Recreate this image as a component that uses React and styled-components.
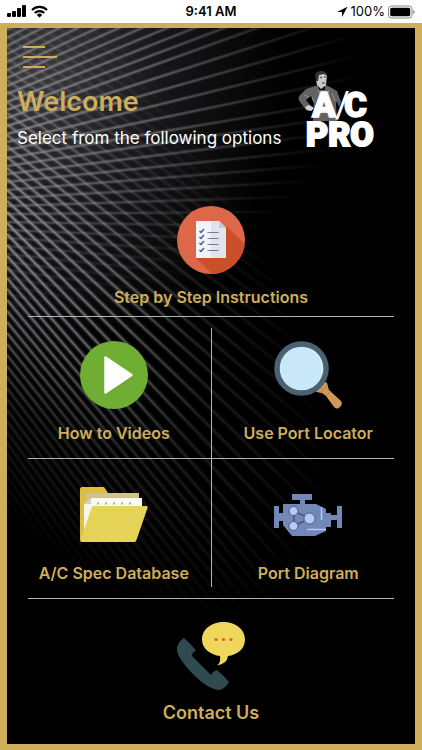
import React from "react";
import styled, { createGlobalStyle } from "styled-components";

const GOLD = "#cfae5b";

const GlobalStyle = createGlobalStyle`
  *, *::before, *::after { box-sizing: border-box; }
  body { margin: 0; background: #000; font-family: Inter, "Liberation Sans", sans-serif; }
`;

const Screen = styled.div`
  display: flex;
  flex-direction: column;
  min-height: 100vh;
`;

const StatusBar = styled.div`
  display: grid;
  grid-template-columns: 1fr auto 1fr;
  align-items: center;
  height: 23px;
  padding: 0 7px;
  background: #fff;
  color: #000;
  font-size: 13px;
  line-height: 23px;
`;

const StatusGroup = styled.div`
  display: flex;
  align-items: center;
  justify-content: ${(p) => (p.$end ? "flex-end" : "flex-start")};
  gap: ${(p) => (p.$end ? "3px" : "5px")};
`;

const Time = styled.span`
  font-weight: 600;
`;

const Frame = styled.div`
  position: relative;
  flex: 1;
  display: flex;
  flex-direction: column;
  border: solid ${GOLD};
  border-width: 5px 7px 6px;
  background: #000;
`;

const Backdrop = styled.svg`
  position: absolute;
  inset: 0;
  width: 100%;
  height: 100%;
`;

const Content = styled.div`
  position: relative;
  display: flex;
  flex-direction: column;
`;

const Header = styled.header`
  display: flex;
  justify-content: space-between;
  align-items: flex-end;
  padding: 14px 42px 0 10px;
`;

const Intro = styled.div`
  display: flex;
  flex-direction: column;
  align-items: flex-start;
`;

const MenuButton = styled.button`
  display: flex;
  margin: 0 0 14px 3px;
  padding: 3px;
  border: 0;
  background: none;
  cursor: pointer;
`;

const Title = styled.h1`
  margin: 0;
  color: ${GOLD};
  font-size: 27px;
  font-weight: 600;
  line-height: 32px;
`;

const Subtitle = styled.p`
  margin: 8px 0 0;
  color: #fff;
  font-size: 17px;
  line-height: 24px;
  white-space: nowrap;
`;

const Options = styled.nav`
  display: flex;
  flex-direction: column;
  margin: 32px 10px 0;
`;

const Pairs = styled.div`
  display: grid;
  grid-template-columns: 1fr 1px 1fr;
`;

const Rule = styled.hr`
  width: calc(100% - 22px);
  height: 1px;
  margin: 0 11px;
  border: 0;
  background: #b4b4b4;
`;

const MiddleRule = styled(Rule)`
  grid-area: 2 / 1 / 3 / 4;
`;

const Divider = styled.div`
  grid-area: 1 / 2 / 4 / 3;
  margin: 11px 0;
  background: #b4b4b4;
`;

const Tile = styled.a`
  display: flex;
  flex-direction: column;
  align-items: center;
  gap: 13px;
  padding: 24px 0 9px;
  color: ${GOLD};
  font-size: 16px;
  font-weight: 600;
  line-height: 20px;
  text-decoration: none;
  white-space: nowrap;
`;

const PairTile = styled(Tile)`
  grid-row: ${(p) => p.$row};
  grid-column: ${(p) => p.$column};
  gap: 14px;
  padding: ${(p) => (p.$row === 1 ? "24px" : "22px")} 0 15px;
`;

const ContactTile = styled(Tile)`
  padding-top: 23px;
  font-size: 18px;
`;

const Icon = styled.svg`
  display: block;
  width: 68px;
  height: 68px;
`;

const interpolate = (stops, v) => {
  for (let i = 1; i < stops.length; i++) {
    const [x0, y0] = stops[i - 1];
    const [x1, y1] = stops[i];
    if (v <= x1) return y0 + ((y1 - y0) * (v - x0)) / (x1 - x0);
  }
  return stops[stops.length - 1][1];
};

const RISING = [[-30, -0.62], [90, -0.36], [130, -0.17], [172, -0.05], [215, 0.08], [300, 0.28], [420, 0.5]];
const FALLING = [[-260, 0.72], [-60, 0.7], [80, 0.72], [165, 0.9], [240, 1.16], [430, 1.4], [640, 1.6]];

const fan = (stops, from, to, step) => {
  const lines = [];
  for (let y = from; y < to; y += step) {
    lines.push(`M0 ${y}L420 ${(y + 420 * interpolate(stops, y)).toFixed(1)}`);
  }
  return lines.join("");
};

const Weave = () => (
  <Backdrop viewBox="0 0 408 716" preserveAspectRatio="xMinYMin slice" aria-hidden="true">
    <defs>
      <radialGradient id="riseGlow" gradientUnits="userSpaceOnUse" cx="0" cy="0" r="1" gradientTransform="translate(10 80) rotate(-10) scale(350 210)">
        <stop offset="0" stopColor="#fff" />
        <stop offset="0.45" stopColor="#aaa" />
        <stop offset="0.75" stopColor="#444" />
        <stop offset="1" stopColor="#000" />
      </radialGradient>
      <radialGradient id="fallGlow" gradientUnits="userSpaceOnUse" cx="0" cy="0" r="1" gradientTransform="translate(0 190) rotate(54) scale(480 210)">
        <stop offset="0" stopColor="#fff" />
        <stop offset="0.35" stopColor="#aaa" />
        <stop offset="0.6" stopColor="#3a3a3a" />
        <stop offset="1" stopColor="#000" />
      </radialGradient>
      <radialGradient id="haze" gradientUnits="userSpaceOnUse" cx="0" cy="0" r="1" gradientTransform="translate(30 40) scale(250 300)">
        <stop offset="0" stopColor="#3a3a3d" />
        <stop offset="0.5" stopColor="#171719" />
        <stop offset="1" stopColor="#000" />
      </radialGradient>
      <mask id="riseMask"><rect width="408" height="716" fill="url(#riseGlow)" /></mask>
      <mask id="fallMask"><rect width="408" height="716" fill="url(#fallGlow)" /></mask>
    </defs>
    <rect width="408" height="716" fill="url(#haze)" />
    <g fill="none">
      <g mask="url(#fallMask)">
        <path d={fan(FALLING, -256, 640, 11)} stroke="#77777b" strokeOpacity="0.35" strokeWidth="5" />
        <path d={fan(FALLING, -256, 640, 11)} stroke="#a0a0a6" strokeOpacity="0.75" strokeWidth="2" />
      </g>
      <g mask="url(#riseMask)">
        <path d={fan(RISING, -30, 400, 8)} stroke="#77777b" strokeOpacity="0.35" strokeWidth="4" />
        <path d={fan(RISING, -30, 400, 8)} stroke="#98989e" strokeOpacity="0.6" strokeWidth="2" />
      </g>
    </g>
  </Backdrop>
);

const Signal = () => (
  <svg width="19" height="13" viewBox="0 0 19 13" aria-hidden="true">
    <rect x="0" y="8" width="4" height="4" rx="1" />
    <rect x="5" y="6" width="4" height="6" rx="1" />
    <rect x="10" y="3" width="4" height="9" rx="1" />
    <rect x="15" y="0" width="4" height="12" rx="1" />
  </svg>
);

const Wifi = () => (
  <svg width="17" height="13" viewBox="0 0 17 13" fill="none" stroke="#000" strokeWidth="2.2" aria-hidden="true">
    <path d="M1 5a10.6 10.6 0 0 1 15 0" />
    <path d="M3.8 8a6.6 6.6 0 0 1 9.4 0" />
    <path d="M8.5 12.6 5.8 9.9a3.8 3.8 0 0 1 5.4 0Z" fill="#000" stroke="none" />
  </svg>
);

const Battery = () => (
  <svg width="27" height="14" viewBox="0 0 27 14" aria-hidden="true">
    <rect x="0.5" y="1" width="23.5" height="12" rx="3" fill="none" stroke="#888" />
    <rect x="2.2" y="2.7" width="20" height="8.6" rx="1.6" />
    <path d="M25.2 5v4q1.5-.6 1.5-2t-1.5-2" fill="#888" />
  </svg>
);

const LogoDrawing = styled.svg`
  margin-bottom: 1px;
  overflow: visible;
  font-family: Roboto, sans-serif;
  font-weight: 900;
`;

const Logo = () => (
  <LogoDrawing width="75" height="78" viewBox="0 0 75 78" role="img" aria-label="A/C Pro">
    <path d="M17 15 8 18 2 24Q-1 27 2 31l6 8 5 1 2-2-7-9 5-4 3 8-1 17h24l-1-17 1-3 2 6 2-5-4-11-5-3-6-3Z" fill="#626262" />
    <path d="m14 26 2 5m-10-7 5 2m9-8 4 10m7-9-2 8m5-5 3 8M19 33l-2 8" stroke="#999" strokeWidth="0.9" fill="none" />
    <path d="m7 36 4-2 5 3-3 3-4-1Z" fill="#d4d4d4" />
    <path d="m18 9 1 5 4 5 5-5 1-10-6-3-5 2Z" fill="#c9c9c9" />
    <path d="M18 10 17 4q1-4 6-4 6 0 6 5l-3-2-5 1-1 6Z" fill="#333" />
    <path d="m22 6 2 1m2-1h2m-4 6h3" stroke="#333" fill="none" />
    <path d="m20 15 3 3 4-3v4h-6Z" fill="#111" />
    <g fill="#fff" stroke="#fff">
      <text x="14" y="46" fontSize="35" strokeWidth="1.4">A</text>
      <text x="37" y="46" fontSize="36" fontWeight="400" strokeWidth="0">/</text>
      <text x="46" y="46" fontSize="35" strokeWidth="1.4">C</text>
      <text x="8" y="75" fontSize="34" strokeWidth="2">PRO</text>
    </g>
  </LogoDrawing>
);

const Checklist = () => (
  <Icon viewBox="0 0 68 68" aria-hidden="true">
    <defs><clipPath id="disc"><circle cx="34" cy="34" r="34" /></clipPath></defs>
    <circle cx="34" cy="34" r="34" fill="#dc6749" />
    <path d="m49 20 30 28-20 30-20-6-20-20Z" fill="#c95029" clipPath="url(#disc)" />
    <path d="M19 15h23l7 7v30H19Z" fill="#f2f4fa" />
    <path d="M34 15h8l7 7v30H34Z" fill="#dfe4ed" />
    <path d="M42 15v7h7Z" fill="#c5cbd8" />
    <path d="m22.500 25 1.500 1.500 3-3.500m-4.500 8 1.500 1.500 3-3.500m-4.500 8 1.500 1.500 3-3.500m-4.500 9 1.500 1.500 3-3.500" fill="none" stroke="#465e94" strokeWidth="1.5" />
    <path d="M30.500 26.500h11M30.500 32.500h11M30.500 38.500h11M30.500 44.500h11" stroke="#747f8f" />
  </Icon>
);

const Play = () => (
  <Icon viewBox="0 0 68 68" aria-hidden="true">
    <circle cx="34" cy="34" r="34" fill="#70ad33" />
    <path d="M25.500 16.500v35L51.500 34Z" fill="#fff" stroke="#fff" strokeWidth="2.500" strokeLinejoin="round" />
  </Icon>
);

const Magnifier = () => (
  <Icon viewBox="0 0 68 68" aria-hidden="true">
    <path d="m42 51 6 1 4 3 8 11q3 3 6 0t1-6L55 49l-2-7-4-2Z" fill="#cf9a57" />
    <path d="m46 52 7-7M52 55l5-5" stroke="#a97843" strokeWidth="0.8" />
    <circle cx="27.500" cy="27.500" r="24.500" fill="#c8e8fa" stroke="#4b6070" strokeWidth="5.500" />
    <path d="M39 10q11 8 9 22" stroke="#e2f3fc" strokeWidth="2" fill="none" opacity=".6" />
  </Icon>
);

const Folder = () => (
  <Icon viewBox="0 0 68 68" aria-hidden="true">
    <path d="M0 8q0-2 2-2h22l4 6v45L1 60Q0 61 0 57Z" fill="#dfbd3d" />
    <path d="M6 12h53v25H6Z" fill="#cfc48b" />
    <path d="M4 23h10v32H4Z" fill="#f7f6ec" />
    <path d="m4 23 7-6v6Z" fill="#d5d3bd" />
    <path d="M11 17h51v25H11Z" fill="#fbfaf2" />
    <path d="M17 22.500h35" stroke="#a8a898" strokeWidth="2" strokeDasharray="2 6" />
    <path d="M13 25h53q2 0 1.500 2l-11 32q-.5 2-2 2H2q-2 0-1.500-2l11-32q.5-2 1.500-2Z" fill="#e5d457" />
  </Icon>
);

const Engine = () => (
  <Icon viewBox="0 0 68 68" aria-hidden="true">
    <path d="M18 13h20v6h-7v4h11l10 5v4h5v2h6V25h5v22h-5V39h-6v7h-5v4l-11 5H18l-9-11v-4H5v7H0V25h5v7h4v-9h17v-4h-8Z" fill="#7188b8" />
    <path d="M20 30v15l16-7.500Z" fill="none" stroke="#444f7b" strokeWidth="1.400" />
    <g fill="#bac8f8" stroke="#4c5a8b">
      <circle cx="19.500" cy="30" r="4.500" />
      <circle cx="19.500" cy="45" r="4.500" />
      <circle cx="35.500" cy="37.500" r="5.500" />
    </g>
    <path d="M47.500 26v13M33 48.500h19" stroke="#b8c5ef" strokeWidth="1.500" />
  </Icon>
);

const Phone = () => (
  <Icon viewBox="0 0 68 68" aria-hidden="true">
    <path d="M7 16Q14 22 19 28.500q-3 1-4.500 5L34 53q2-4 6-5 6 5 12 12-4 7-10 8-12-1-28-18Q-2 33 0 25 2 19 7 16Z" fill="#304b50" />
    <path d="M46.500 0C58 0 68 7 68 17.500 68 27 60 33 51 34q-1 8-11 9.500 4-3 3-9.500C34 33 25 27 25 17.500 25 7 35 0 46.500 0Z" fill="#f0d65b" />
    <g fill="#d85b3e">
      <circle cx="39" cy="17.500" r="1.600" />
      <circle cx="46.500" cy="17.500" r="1.600" />
      <circle cx="54" cy="17.500" r="1.600" />
    </g>
  </Icon>
);

export default function App() {
  return (
    <Screen>
      <GlobalStyle />
      <StatusBar>
        <StatusGroup><Signal /><Wifi /></StatusGroup>
        <Time>9:41 AM</Time>
        <StatusGroup $end>
          <svg width="12" height="12" viewBox="0 0 12 12" aria-hidden="true"><path d="M11.500.8 1 6h5v5Z" /></svg>
          <span>100%</span>
          <Battery />
        </StatusGroup>
      </StatusBar>
      <Frame>
        <Weave />
        <Content>
          <Header>
            <Intro>
              <MenuButton type="button" aria-label="Menu">
                <svg width="34" height="24" viewBox="0 0 34 24" stroke={GOLD} strokeWidth="2" aria-hidden="true">
                  <path d="M0 2h22M0 12h34M0 22h22" />
                </svg>
              </MenuButton>
              <Title>Welcome</Title>
              <Subtitle>Select from the following options</Subtitle>
            </Intro>
            <Logo />
          </Header>
          <Options aria-label="Options">
            <Tile href="#instructions"><Checklist />Step by Step Instructions</Tile>
            <Rule />
            <Pairs>
              <PairTile href="#videos" $row={1} $column={1}><Play />How to Videos</PairTile>
              <PairTile href="#locator" $row={1} $column={3}><Magnifier />Use Port Locator</PairTile>
              <MiddleRule />
              <PairTile href="#database" $row={3} $column={1}><Folder />A/C Spec Database</PairTile>
              <PairTile href="#diagram" $row={3} $column={3}><Engine />Port Diagram</PairTile>
              <Divider />
            </Pairs>
            <Rule />
            <ContactTile href="#contact"><Phone />Contact Us</ContactTile>
          </Options>
        </Content>
      </Frame>
    </Screen>
  );
}
